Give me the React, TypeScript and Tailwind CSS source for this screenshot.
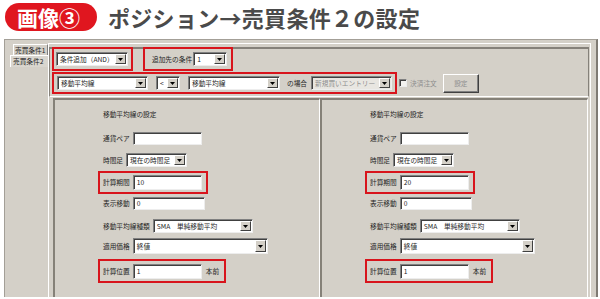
import React from 'react';

/**
 * Trading tool screenshot - position -> sell/buy condition 2 settings
 */

const jp = "font-['Noto_Sans_CJK_JP','Noto_Sans',sans-serif]";

function DropArrow(): JSX.Element {
  return (
    <span className="flex h-full w-[11px] shrink-0 items-center justify-center border border-t-white border-l-white border-b-[#404040] border-r-[#404040] bg-[#d4d0c8]">
      <svg width="5" height="3" viewBox="0 0 5 3">
        <path d="M0 0h5L2.5 3z" fill="#000" />
      </svg>
    </span>
  );
}

function Select({
  value,
  className = '',
  disabled = false,
}: {
  value: string;
  className?: string;
  disabled?: boolean;
}): JSX.Element {
  return (
    <div
      className={`flex shrink-0 items-stretch border border-t-[#808080] border-l-[#808080] border-b-[#ededed] border-r-[#ededed] p-[1px] shadow-[inset_1px_1px_0_#404040] ${
        disabled ? 'bg-[#e8e6e1] text-[#8e8e8e]' : 'bg-white text-[#1e1e1e]'
      } ${className}`}
    >
      <span className="flex flex-1 items-center overflow-hidden whitespace-nowrap pl-[2px]">{value}</span>
      <DropArrow />
    </div>
  );
}

function TextBox({ value = '', className = '' }: { value?: string; className?: string }): JSX.Element {
  return (
    <div
      className={`flex shrink-0 items-center border border-t-[#808080] border-l-[#808080] border-b-[#ededed] border-r-[#ededed] bg-white pl-[3px] text-[#1e1e1e] shadow-[inset_1px_1px_0_#404040] ${className}`}
    >
      {value}
    </div>
  );
}

/**
 * One moving average settings group
 */
function MaGroup({ period, className = '' }: { period: string; className?: string }): JSX.Element {
  return (
    <div
      className={`flex flex-col items-start border-l-2 border-t-2 border-[#858178] border-r border-r-white pl-[48px] pt-[10px] ${className}`}
    >
      <div className="h-[9px] leading-[9px]">移動平均線の設定</div>

      <div className="mt-[13px] flex h-[13px] items-center gap-[3px]">
        <span>通貨ペア</span>
        <TextBox className="h-[13px] w-[69px]" />
      </div>

      <div className="mt-[8px] flex h-[14px] items-center gap-[3px]">
        <span>時間足</span>
        <Select className="h-[14px] w-[61px]" value="現在の時間足" />
      </div>

      <div className="-ml-[5px] mt-[4px] flex h-[23px] items-center gap-[3px] border-2 border-[#d8141c] pl-[3px] pr-[4px]">
        <span>計算期間</span>
        <TextBox className="h-[15px] w-[69px]" value={period} />
      </div>

      <div className="mt-[3px] flex h-[13px] items-center gap-[3px]">
        <span>表示移動</span>
        <TextBox className="h-[13px] w-[72px]" value="0" />
      </div>

      <div className="mt-[9px] flex h-[14px] items-center gap-[3px]">
        <span>移動平均線種類</span>
        <Select className="h-[14px] w-[100px]" value="SMA　単純移動平均" />
      </div>

      <div className="mt-[5px] flex h-[16px] items-center gap-[3px]">
        <span>適用価格</span>
        <Select className="h-[16px] w-[135px]" value="終値" />
      </div>

      <div className="-ml-[5px] mt-[5px] flex h-[24px] items-center border-2 border-[#d8141c] pl-[3px] pr-[5px]">
        <span>計算位置</span>
        <TextBox className="ml-[3px] h-[15px] w-[69px]" value="1" />
        <span className="ml-[4px]">本前</span>
      </div>
    </div>
  );
}

export default function App(): JSX.Element {
  return (
    <div className={`h-[299px] w-[600px] overflow-hidden bg-white ${jp}`}>
      {/* Title */}
      <div className="flex h-[39px] items-start pl-[5px] pt-[3px]">
        <div className="flex h-[28px] w-[92px] items-center rounded-full bg-[#e0161f] pl-[12px] text-[21px] font-bold leading-none text-white">
          画像③
        </div>
        <div className="ml-[11px] mt-[1px] whitespace-nowrap text-[22px] font-bold leading-[26px] tracking-[0.3px] text-[#4a4a4a]">
          ポジション→売買条件２の設定
        </div>
      </div>

      {/* Window */}
      <div className="ml-[4px] flex h-[258px] w-[594px] border-l border-t border-[#a39f97] border-r-2 border-r-[#7f7b74] bg-[#d4d0c8] text-[6.7px] leading-none text-[#1e1e1e]">
        {/* Tabs */}
        <div className="flex w-[43px] shrink-0 flex-col">
          <div className="ml-[8px] mt-[4px] flex h-[11px] w-[35px] items-center whitespace-nowrap border-l border-t border-white border-r border-r-[#808080] pl-[1px]">
            売買条件1
          </div>
          <div className="ml-[5px] flex h-[12px] w-[38px] items-center whitespace-nowrap border-l border-t border-white bg-[#d9d6cf] pl-[2px]">
            売買条件2
          </div>
        </div>

        {/* Tab panel */}
        <div className="mr-[5px] mt-[3px] flex flex-1 flex-col border-l border-t border-r border-white">
          {/* Header panel */}
          <div className="mr-[1px] mt-[3px] flex flex-col border-l border-t-2 border-[#85817a] border-r border-r-[#85817a] border-b border-b-white pb-[2px]">
            <div className="-mt-[2px] ml-[2px] flex h-[24px] items-start">
              <div className="flex h-[24px] items-center border-2 border-[#d8141c] pl-[2px] pr-[3px]">
                <Select className="h-[14px] w-[72px]" value="条件追加（AND）" />
              </div>
              <div className="ml-[10px] flex h-[24px] items-center gap-[1px] border-2 border-[#d8141c] pl-[7px] pr-[4px]">
                <span>追加先の条件</span>
                <Select className="h-[14px] w-[34px]" value="1" />
              </div>
            </div>

            <div className="ml-[2px] mt-[1px] flex h-[22px] items-center">
              <div className="flex h-[22px] items-center border-2 border-[#d8141c] pl-[3px] pr-[3px]">
                <Select className="h-[14px] w-[91px]" value="移動平均線" />
                <Select className="ml-[8px] h-[14px] w-[24px]" value="<" />
                <Select className="ml-[8px] h-[14px] w-[92px]" value="移動平均線" />
                <span className="ml-[7px]">の場合</span>
                <Select className="ml-[4px] h-[14px] w-[81px]" value="新規買いエントリー" disabled />
              </div>
              <span className="ml-[2px] h-[8px] w-[8px] border border-t-[#808080] border-l-[#808080] border-b-[#ededed] border-r-[#ededed] bg-[#f4f3f0] shadow-[inset_1px_1px_0_#404040]" />
              <span className="ml-[3px] text-[#8e8e8e]">決済注文</span>
              <div className="ml-[6px] flex h-[19px] w-[36px] items-center justify-center border border-t-white border-l-white border-b-[#404040] border-r-[#404040] text-[#8e8e8e] shadow-[inset_-1px_-1px_0_#808080]">
                設定
              </div>
            </div>
          </div>

          {/* Groups */}
          <div className="mt-[1px] flex flex-1 pl-[4px]">
            <MaGroup className="w-[267px]" period="10" />
            <MaGroup className="w-[268px]" period="20" />
          </div>
        </div>
      </div>
    </div>
  );
}
